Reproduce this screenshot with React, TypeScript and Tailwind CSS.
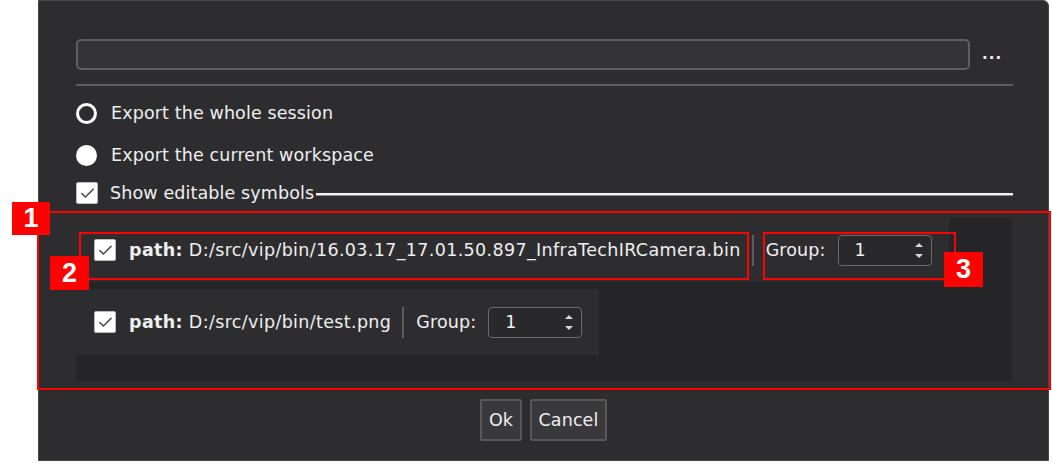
import { Check } from "lucide-react";

const font = { fontFamily: '"DejaVu Sans", "Noto Sans", sans-serif' };

function Checkbox() {
  return (
    <span className="flex h-[22px] w-[22px] shrink-0 items-center justify-center rounded-[2px] border border-[#bdbdbd] bg-white">
      <Check className="h-[17px] w-[17px] text-[#4a4a4a]" strokeWidth={2.25} />
    </span>
  );
}

function SpinBox({ value }: { value: string }) {
  return (
    <div className="flex h-[31px] w-[94px] shrink-0 items-center justify-between rounded-[4px] border border-[#6b6b6e] bg-[#29292b] pl-[16px] pr-[8px]">
      <span>{value}</span>
      <span className="flex flex-col items-center gap-[7px]">
        <span className="h-0 w-0 border-x-[4px] border-b-[4px] border-x-transparent border-b-[#d8d8d8]" />
        <span className="h-0 w-0 border-x-[4px] border-t-[4px] border-x-transparent border-t-[#d8d8d8]" />
      </span>
    </div>
  );
}

function PathRow({ path }: { path: string }) {
  return (
    <div className="flex w-fit shrink-0 items-center bg-[#2d2d30] pl-[18px] pr-[17px]">
      <Checkbox />
      <span className="ml-[13px] whitespace-nowrap tracking-[0.35px]">
        <b className="font-bold">path:</b> {path}
      </span>
      <span className="ml-[11px] h-[31px] w-[2px] shrink-0 bg-[#5c5c5f]" />
      <span className="ml-[12px] whitespace-nowrap">Group:</span>
      <span className="ml-[12px]">
        <SpinBox value="1" />
      </span>
    </div>
  );
}

function Tag({ n, className }: { n: string; className: string }) {
  return (
    <div
      className={`absolute flex items-center justify-center bg-[#ff0000] text-[27px] font-bold leading-none text-white ${className}`}
      style={{ fontFamily: '"Liberation Sans", Arial, sans-serif' }}
    >
      {n}
    </div>
  );
}

export default function App() {
  return (
    <div className="relative h-[463px] w-[1052px] overflow-hidden bg-white text-[17.5px] leading-[22px] tracking-[0.12px] text-[#efefef]" style={font}>
      <div className="ml-[38px] flex h-[461px] w-[1011px] flex-col rounded-tr-[6px] border border-[#45454a] bg-[#2d2d30] pl-[37px]">
        <div className="mt-[38px] flex items-center">
          <div className="h-[31px] w-[894px] shrink-0 rounded-[5px] border-2 border-[#5f5f63] bg-[#333338]" />
          <span className="ml-[12px] text-[15px] font-bold leading-none tracking-[1px]">...</span>
        </div>
        <div className="mt-[14px] h-[2px] w-[937px] bg-[#5d5d60]" />

        <label className="mt-[16px] flex h-[22px] items-center">
          <span className="h-[21px] w-[21px] rounded-full border-[3px] border-white" />
          <span className="ml-[14px]">Export the whole session</span>
        </label>
        <label className="mt-[20px] flex h-[22px] items-center">
          <span className="h-[21px] w-[21px] rounded-full bg-white" />
          <span className="ml-[14px]">Export the current workspace</span>
        </label>
        <div className="mt-[16px] flex h-[22px] w-[937px] items-center">
          <Checkbox />
          <span className="ml-[12px] whitespace-nowrap">Show editable symbols</span>
          <span className="ml-[2px] mt-[2px] h-[3px] flex-1 border-t-2 border-b border-t-[#f2f2f2] border-b-[#8a8a8a]" />
        </div>

        <div className="mt-[14px] flex h-[163px] w-[936px] flex-col bg-[#252527]">
          <div className="flex h-[64px] shrink-0">
            <PathRow path="D:/src/vip/bin/16.03.17_17.01.50.897_InfraTechIRCamera.bin" />
          </div>
          <div className="mt-[7px] flex h-[66px] shrink-0">
            <PathRow path="D:/src/vip/bin/test.png" />
          </div>
        </div>

        <div className="-ml-[37px] mt-[18px] flex justify-center gap-[8px]">
          <button className="h-[42px] w-[42px] rounded-[2px] border-2 border-[#58585b] bg-[#39393c]">Ok</button>
          <button className="h-[42px] w-[77px] rounded-[2px] border-2 border-[#58585b] bg-[#39393c]">Cancel</button>
        </div>
      </div>

      {/* annotation overlays */}
      <div className="absolute left-[37px] top-[211px] h-[179px] w-[1014px] border-2 border-[#ff0000]" />
      <div className="absolute left-[79px] top-[232px] h-[48px] w-[670px] border-2 border-[#ff0000]" />
      <div className="absolute left-[763px] top-[232px] h-[48px] w-[193px] border-2 border-[#ff0000]" />
      <Tag n="1" className="left-[12px] top-[202px] h-[33px] w-[38px]" />
      <Tag n="2" className="left-[50px] top-[256px] h-[34px] w-[39px]" />
      <Tag n="3" className="left-[944px] top-[252px] h-[35px] w-[39px]" />
    </div>
  );
}
